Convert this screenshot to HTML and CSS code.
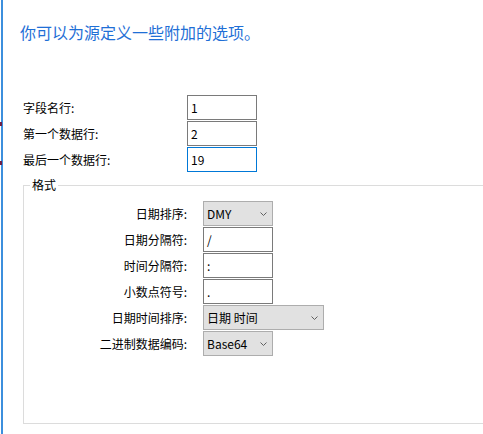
FILE: index.html
```html
<!DOCTYPE html>
<html lang="zh-CN">
<head>
<meta charset="utf-8">
<title>选项</title>
<link rel="stylesheet" href="styles.css">
</head>
<body>
<div class="edge"><span class="tick tick-a"></span><span class="tick tick-b"></span></div>
<main class="page">
  <h1 class="title">你可以为源定义一些附加的选项。</h1>
  <div class="rows rows-top">
    <label class="lbl">字段名行:</label><div class="box">1</div>
    <label class="lbl">第一个数据行:</label><div class="box">2</div>
    <label class="lbl">最后一个数据行:</label><div class="box focused">19</div>
  </div>
  <fieldset class="group">
    <legend class="legend">格式</legend>
    <div class="rows rows-inner">
      <label class="lbl">日期排序:</label>
      <div class="combo w70"><span>DMY</span><svg class="chev" width="7" height="4" viewBox="0 0 7 4"><polyline points="0.5,0.5 3.5,3.5 6.5,0.5" fill="none" stroke="#606060" stroke-width="1"/></svg></div>
      <label class="lbl">日期分隔符:</label>
      <div class="box w70">/</div>
      <label class="lbl">时间分隔符:</label>
      <div class="box w70">:</div>
      <label class="lbl">小数点符号:</label>
      <div class="box w70">.</div>
      <label class="lbl">日期时间排序:</label>
      <div class="combo w120"><span>日期 时间</span><svg class="chev" width="7" height="4" viewBox="0 0 7 4"><polyline points="0.5,0.5 3.5,3.5 6.5,0.5" fill="none" stroke="#606060" stroke-width="1"/></svg></div>
      <label class="lbl">二进制数据编码:</label>
      <div class="combo w70"><span>Base64</span><svg class="chev" width="7" height="4" viewBox="0 0 7 4"><polyline points="0.5,0.5 3.5,3.5 6.5,0.5" fill="none" stroke="#606060" stroke-width="1"/></svg></div>
    </div>
  </fieldset>
</main>
</body>
</html>
```
FILE: styles.css
```css
html, body {
  margin: 0;
  padding: 0;
}
body {
  width: 483px;
  height: 434px;
  overflow: hidden;
  background: #ffffff;
  display: flex;
  font-family: "Noto Sans CJK SC", "Noto Sans", sans-serif;
  font-size: 12px;
  color: #000000;
}
.edge {
  position: relative;
  flex: none;
  width: 1px;
  border-right: 2px solid #3c8fdd;
}
.tick {
  position: absolute;
  left: 0;
  width: 2px;
  height: 4px;
  background: #6e1f47;
}
.tick-a { top: 122px; }
.tick-b { top: 161px; }
.page {
  flex: 1;
  padding: 21px 0 0 17px;
  min-width: 0;
}
.title {
  margin: 0;
  font-size: 16px;
  font-weight: normal;
  line-height: 22px;
  color: #1f6fd6;
}
.rows {
  display: grid;
  grid-auto-rows: 25px;
  row-gap: 1px;
  align-items: center;
}
.rows-top {
  margin: 52px 0 0 3px;
  grid-template-columns: 164px 70px;
}
.lbl {
  line-height: 16px;
  white-space: nowrap;
}
.box {
  box-sizing: border-box;
  height: 25px;
  border: 1px solid #7a7a7a;
  padding: 0 3px;
  display: flex;
  align-items: center;
  background: #ffffff;
  line-height: 16px;
}
.box.focused {
  border-color: #0078d7;
}
.group {
  margin: 5px 0 0 3px;
  box-sizing: border-box;
  height: 247px;
  border: 1px solid #dcdcdc;
  border-right: none;
  padding: 0;
  min-width: 0;
}
.legend {
  margin-left: 6px;
  padding: 0 2px;
  line-height: 16px;
  font-size: 12px;
}
.rows-inner {
  margin-top: 8px;
  grid-template-columns: 163px auto;
  column-gap: 16px;
  justify-items: start;
}
.rows-inner .lbl {
  justify-self: end;
  text-align: right;
}
.w70 { width: 70px; }
.w120 { width: 121px; }
.combo {
  box-sizing: border-box;
  height: 25px;
  border: 1px solid #adadad;
  background: #e1e1e1;
  padding: 0 5px 0 3px;
  display: flex;
  align-items: center;
  justify-content: space-between;
  line-height: 16px;
}
.chev {
  display: block;
  flex: none;
}
```
